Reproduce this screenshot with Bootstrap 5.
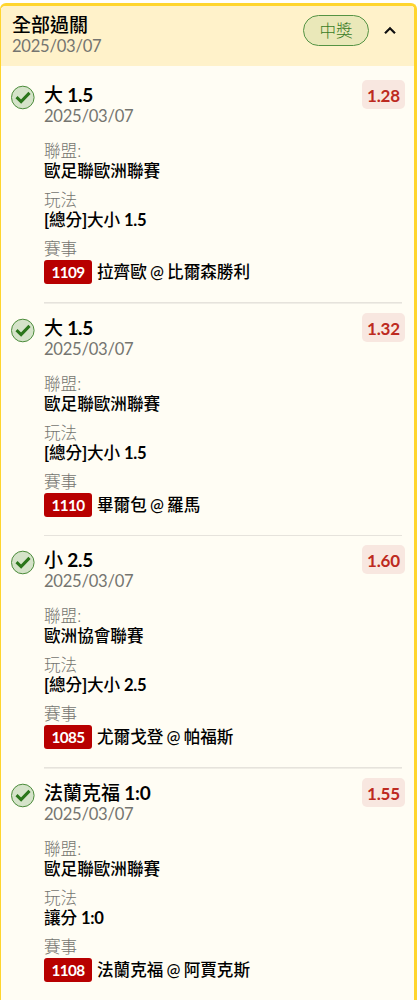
<!DOCTYPE html>
<html lang="zh-Hant">
<head>
<meta charset="utf-8">
<meta name="viewport" content="width=device-width, initial-scale=1">
<title>全部過關</title>
<link href="https://cdn.jsdelivr.net/npm/bootstrap@5.3.0/dist/css/bootstrap.min.css" rel="stylesheet">
<style>
  body { font-family: Lato, "Noto Sans CJK TC", sans-serif; font-size: 16.6px; color: #000; background: #fff; overflow: hidden; }
  .slip { margin: 3px 2px 0 0; border: 3px solid #ffd52e; border-left-width: 1px; border-bottom: 0; border-radius: 6px 6px 0 0; background: #fffdf4; height: 997px; overflow: hidden; }
  .slip-head { height: 60px; padding: 8px 17px 0 11px; background: #fff2ca; }
  .slip-title { font-size: 19px; font-weight: 500; line-height: 22px; }
  .slip-date { color: #757570; line-height: 20px; letter-spacing: -.25px; }
  .won { width: 66px; height: 31px; margin-top: 1px; border: 1px solid #559344; border-radius: 16px; background: #eae8b9; color: #3a7c26; font-weight: 300; line-height: 30px; }
  .chevron { margin: 10px 1px 0 15px; }
  .leg { height: 232.7px; padding: 14px 9px 0 10px; }
  .leg-icon { width: 24px; margin: 1px 9px 0 0; }
  .leg-body { height: 219.5px; }
  .leg:not(:last-child) .leg-body { background: linear-gradient(#e6e3dc, #e6e3dc) left bottom / calc(100% - 3px) 1.6px no-repeat; }
  .odds { width: 43px; height: 29px; margin-top: -4px; border-radius: 5px; background: #f8e7e0; color: #bd2a20; font-size: 17px; font-weight: 700; letter-spacing: -.2px; line-height: 31px; }
  .field { height: 49px; }
  .field-name { height: 20px; color: #757570; font-weight: 300; line-height: 18px; }
  .field-value { font-weight: 500; line-height: 18px; }
  .field-value b, .slip-title b { font-weight: 700; letter-spacing: -.3px; }
  .match-no { width: 48px; height: 24px; margin-right: 5px; border-radius: 3px; background: #b80000; color: #fff; font-size: 15.3px; letter-spacing: -.6px; font-weight: 700; line-height: 24px; }
  .match-name { word-spacing: -1px; }
</style>
</head>
<body>
<main class="slip">
  <header class="slip-head d-flex justify-content-between">
    <div>
      <div class="slip-title">全部過關</div>
      <div class="slip-date">2025/03/07</div>
    </div>
    <div class="d-flex align-items-start">
      <span class="won text-center">中獎</span>
      <svg class="chevron" width="12" height="12" viewBox="0 0 12 12" fill="none" stroke="#111" stroke-width="2.2"><path d="M1 9.3 6 4.3l5 5"/></svg>
    </div>
  </header>
  <div id="legs" class="pt-1"></div>
</main>
<template id="leg">
  <section class="leg d-flex">
    <svg class="leg-icon flex-shrink-0" height="25" viewBox="0 0 24 25"><circle cx="11.8" cy="12.5" r="11.3" fill="#d5e3c9" stroke="#4b8b3a" stroke-width="1"/><path d="m5.5 12.2 4.6 4.4 8.4-8.7" fill="none" stroke="#2b761b" stroke-width="3"/></svg>
    <div class="leg-body flex-grow-1">
      <div class="d-flex justify-content-between">
        <div>
          <div class="slip-title" data-k="pick"></div>
          <div class="slip-date">2025/03/07</div>
        </div>
        <span class="odds text-center" data-k="odds"></span>
      </div>
      <div class="field mt-3"><div class="field-name">聯盟:</div><div class="field-value" data-k="league"></div></div>
      <div class="field"><div class="field-name">玩法</div><div class="field-value" data-k="play"></div></div>
      <div class="field"><div class="field-name">賽事</div><div class="field-value d-flex align-items-center"><span class="match-no text-center" data-k="no"></span><span class="match-name" data-k="match"></span></div></div>
    </div>
  </section>
</template>
<script src="https://cdn.jsdelivr.net/npm/bootstrap@5.3.0/dist/js/bootstrap.bundle.min.js"></script>
<script>
  const legs = [
    { pick: '大 1.5', odds: '1.28', league: '歐足聯歐洲聯賽', play: '[總分]大小 1.5', no: '1109', match: '拉齊歐 @ 比爾森勝利' },
    { pick: '大 1.5', odds: '1.32', league: '歐足聯歐洲聯賽', play: '[總分]大小 1.5', no: '1110', match: '畢爾包 @ 羅馬' },
    { pick: '小 2.5', odds: '1.60', league: '歐洲協會聯賽', play: '[總分]大小 2.5', no: '1085', match: '尤爾戈登 @ 帕福斯' },
    { pick: '法蘭克福 1:0', odds: '1.55', league: '歐足聯歐洲聯賽', play: '讓分 1:0', no: '1108', match: '法蘭克福 @ 阿賈克斯' }
  ];
  const tpl = document.getElementById('leg');
  for (const leg of legs) {
    const node = tpl.content.cloneNode(true);
    node.querySelectorAll('[data-k]').forEach(el => {
      // figures are set bolder than the Chinese text around them
      el.innerHTML = leg[el.dataset.k].replace(/[\[\]]| \d[.:]\d/g, '<b>$&</b>');
    });
    document.getElementById('legs').append(node);
  }
</script>
</body>
</html>
